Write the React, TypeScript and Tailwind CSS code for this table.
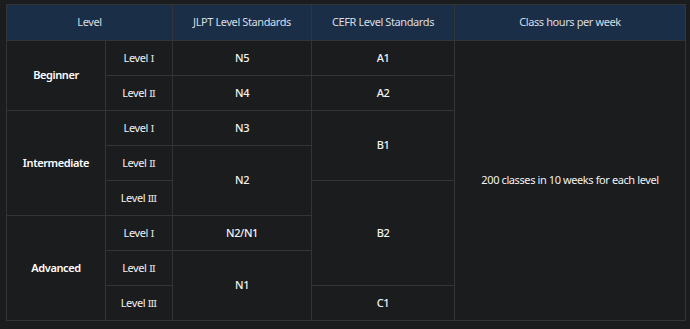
const rows = [
  { group: "Beginner", span: 2, level: "Ⅰ", jlpt: { t: "N5", span: 1 }, cefr: { t: "A1", span: 1 } },
  { level: "Ⅱ", jlpt: { t: "N4", span: 1 }, cefr: { t: "A2", span: 1 } },
  { group: "Intermediate", span: 3, level: "Ⅰ", jlpt: { t: "N3", span: 1 }, cefr: { t: "B1", span: 2 } },
  { level: "Ⅱ", jlpt: { t: "N2", span: 2 } },
  { level: "Ⅲ", cefr: { t: "B2", span: 3 } },
  { group: "Advanced", span: 3, level: "Ⅰ", jlpt: { t: "N2/N1", span: 1 } },
  { level: "Ⅱ", jlpt: { t: "N1", span: 2 } },
  { level: "Ⅲ", cefr: { t: "C1", span: 1 } },
];

type Row = {
  group?: string;
  span?: number;
  level: string;
  jlpt?: { t: string; span: number };
  cefr?: { t: string; span: number };
};

const cell = "border border-[#333436] text-center align-middle";

export default function App() {
  return (
    <div
      className="w-[690px] h-[329px] bg-[#1b1c1e] pt-[4px] pl-[6px]"
      style={{ fontFamily: '"Noto Sans", "Noto Sans CJK JP", sans-serif' }}
    >
      <table className="table-fixed border-collapse w-[679px] text-[11px] tracking-[-0.4px] text-[#f2f2f2]">
        <colgroup>
          <col className="w-[99px]" />
          <col className="w-[67px]" />
          <col className="w-[139px]" />
          <col className="w-[143px]" />
          <col className="w-[231px]" />
        </colgroup>
        <thead>
          <tr className="h-[36px] bg-[#1a2e47] text-[#d9dde3]">
            <th colSpan={2} className={`${cell} font-normal`}>Level</th>
            <th className={`${cell} font-normal`}>JLPT Level Standards</th>
            <th className={`${cell} font-normal`}>CEFR Level Standards</th>
            <th className={`${cell} font-normal`}>Class hours per week</th>
          </tr>
        </thead>
        <tbody>
          {(rows as Row[]).map((r, i) => (
            <tr key={i} className="h-[35px]">
              {r.group && (
                <td rowSpan={r.span} className={`${cell} font-semibold text-white`}>
                  {r.group}
                </td>
              )}
              <td className={cell}>
                Level{" "}
                <span
                  className="text-[10px] leading-none tracking-normal text-[#e6e6e6]"
                  style={{ fontFamily: '"DejaVu Serif", "Noto Sans CJK JP", serif' }}
                >
                  {r.level}
                </span>
              </td>
              {r.jlpt && (
                <td rowSpan={r.jlpt.span} className={`${cell} font-medium`}>
                  {r.jlpt.t}
                </td>
              )}
              {r.cefr && (
                <td rowSpan={r.cefr.span} className={`${cell} font-medium`}>
                  {r.cefr.t}
                </td>
              )}
              {i === 0 && (
                <td rowSpan={8} className={cell}>
                  200 classes in 10 weeks for each level
                </td>
              )}
            </tr>
          ))}
        </tbody>
      </table>
    </div>
  );
}
